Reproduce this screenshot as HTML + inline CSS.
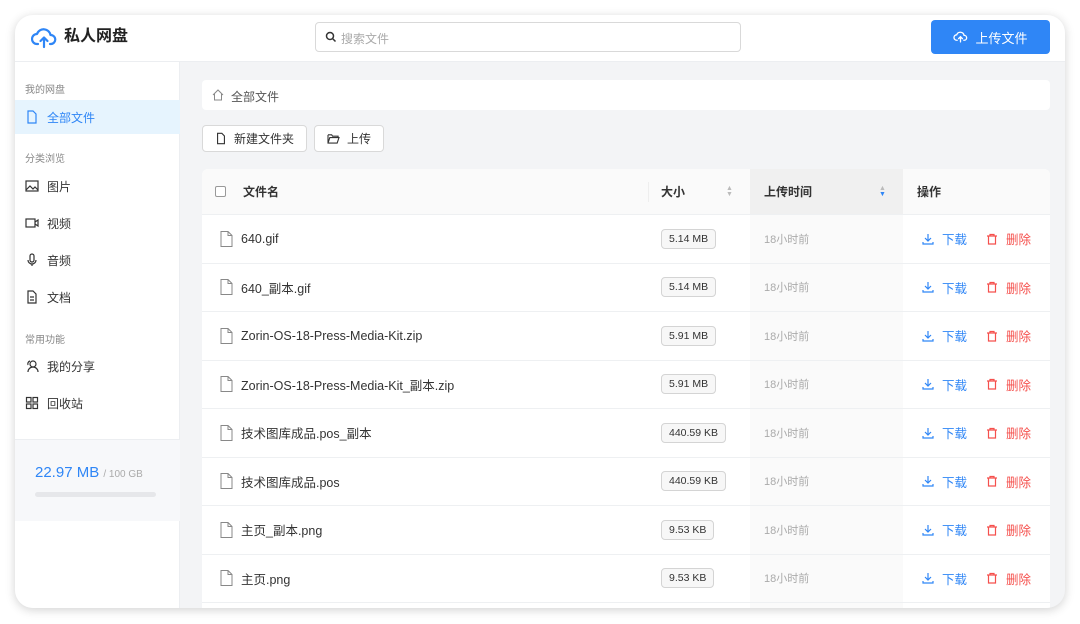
<!DOCTYPE html>
<html><head><meta charset="utf-8"><style>
*{box-sizing:border-box;margin:0;padding:0}
body{width:1080px;height:624px;background:#fff;font-family:"Liberation Sans","Noto Sans CJK SC",sans-serif;position:relative;overflow:hidden;color:#333}
.win{position:absolute;left:15px;top:15px;width:1050px;height:593px;border-radius:18px;background:#f3f4f6;overflow:hidden;box-shadow:0 2px 10px rgba(0,0,0,.18)}
.hdr{position:absolute;left:0;top:0;width:1050px;height:47px;background:#fff;border-bottom:1px solid #eceef1}
.side{position:absolute;left:0;top:47px;width:165px;height:546px;background:#fff;border-right:1px solid #eceef1}
.abs{position:absolute}
.sec{position:absolute;left:10px;font-size:10px;color:#888}
.it{position:absolute;left:0;width:165px;height:34px;font-size:12px;color:#333;display:flex;align-items:center;padding-left:10px}
.it svg{margin-right:8px}
.tbl{position:absolute;left:187px;top:154px;width:848px;height:450px;background:#fff;border-radius:6px;overflow:hidden}
.row{position:absolute;left:0;width:848px;height:48.5px;border-bottom:1px solid #eef0f2;font-size:12.5px}
.c{position:absolute;top:0;height:100%;display:flex;align-items:center}
.tag{border:1px solid #d4d4d4;background:#f7f7f7;border-radius:4px;font-size:10.5px;padding:3px 7px;color:#333}
</style></head><body>
<div class="win">
 <div class="hdr">
  <svg class="abs" style="left:16px;top:12px" width="26" height="22" viewBox="0 0 26 22" fill="none" stroke="#2f86f6" stroke-width="2.2" stroke-linecap="round" stroke-linejoin="round"><path d="M7 17H6a5 5 0 0 1 0-10 7 7 0 0 1 13.5 1 4.5 4.5 0 0 1 0.5 9h-1"/><path d="M13 20v-9M9.5 14l3.5-3.5 3.5 3.5"/></svg>
  <div class="abs" style="left:49px;top:11px;font-size:16px;font-weight:bold;color:#222;line-height:22px">私人网盘</div>
  <div class="abs" style="left:300px;top:7px;width:426px;height:30px;border:1px solid #d9d9d9;border-radius:4px;font-size:12px;color:#aaa;padding:7px 0 0 25px">搜索文件
   <svg class="abs" style="left:9px;top:8px" width="12" height="12" viewBox="0 0 12 12" fill="none" stroke="#333" stroke-width="1.5"><circle cx="5" cy="5" r="3.5"/><path d="M7.5 7.5l3 3"/></svg></div>
  <div class="abs" style="left:916px;top:5px;width:119px;height:34px;background:#2f86f6;border-radius:4px;color:#fff;font-size:13px;display:flex;align-items:center;justify-content:center">
   <svg width="15" height="12" viewBox="0 0 26 22" fill="none" stroke="#fff" stroke-width="2.4" stroke-linecap="round" style="margin-right:7px"><path d="M7 17H6a5 5 0 0 1 0-10 7 7 0 0 1 13.5 1 4.5 4.5 0 0 1 0.5 9h-1"/><path d="M13 20v-9M9.5 14l3.5-3.5 3.5 3.5"/></svg>上传文件</div>
 </div>
 <div class="side">
  <div class="sec" style="top:19px">我的网盘</div>
  <div class="it" style="top:38px;background:#e6f4fe;color:#2f86f6"><svg width="14" height="14" viewBox="0 0 14 14" fill="none" stroke="#2f86f6" stroke-width="1.2"><path d="M3 1h5l3 3v9H3z"/></svg>全部文件</div>
  <div class="sec" style="top:88px">分类浏览</div>
  <div class="it" style="top:107px"><svg width="14" height="14" viewBox="0 0 14 14" fill="none" stroke="#333" stroke-width="1.2"><rect x="1" y="2" width="12" height="10"/><path d="M1 11l4-4 3 3 2-2 3 3"/></svg>图片</div>
  <div class="it" style="top:144px"><svg width="14" height="14" viewBox="0 0 14 14" fill="none" stroke="#333" stroke-width="1.2"><rect x="1" y="3" width="9" height="8"/><path d="M10 6l3-2v6l-3-2"/></svg>视频</div>
  <div class="it" style="top:181px"><svg width="14" height="14" viewBox="0 0 14 14" fill="none" stroke="#333" stroke-width="1.2"><rect x="5" y="1" width="4" height="8" rx="2"/><path d="M3 7a4 4 0 0 0 8 0M7 11v2"/></svg>音频</div>
  <div class="it" style="top:218px"><svg width="14" height="14" viewBox="0 0 14 14" fill="none" stroke="#333" stroke-width="1.2"><path d="M3 1h5l3 3v9H3zM5 7h4M5 10h4"/></svg>文档</div>
  <div class="sec" style="top:269px">常用功能</div>
  <div class="it" style="top:287px"><svg width="14" height="14" viewBox="0 0 14 14" fill="none" stroke="#333" stroke-width="1.2"><circle cx="8" cy="5" r="3"/><path d="M3 13a5 5 0 0 1 10 0M5 2a3 3 0 0 0-2 4"/></svg>我的分享</div>
  <div class="it" style="top:324px"><svg width="14" height="14" viewBox="0 0 14 14" fill="none" stroke="#333" stroke-width="1.2"><rect x="1.5" y="1.5" width="4.5" height="4.5"/><rect x="8" y="1.5" width="4.5" height="4.5"/><rect x="1.5" y="8" width="4.5" height="4.5"/><rect x="8" y="8" width="4.5" height="4.5"/></svg>回收站</div>
  <div class="abs" style="left:0;top:377px;width:165px;height:82px;background:#f7f8fa;border-top:1px solid #eceef1">
   <div class="abs" style="left:20px;top:24px;font-size:15px;color:#2f86f6">22.97 MB <span style="font-size:10px;color:#aaa">/ 100 GB</span></div>
   <div class="abs" style="left:20px;top:52px;width:121px;height:5px;border-radius:3px;background:#e6e7ea"></div>
  </div>
 </div>
 <div class="abs" style="left:187px;top:65px;width:848px;height:30px;background:#fff;border-radius:4px;font-size:12px;color:#555;padding:8px 0 0 29px">全部文件
  <svg class="abs" style="left:10px;top:9px" width="12" height="12" viewBox="0 0 12 12" fill="none" stroke="#888" stroke-width="1"><path d="M1 6l5-5 5 5M2.5 5v6h7V5"/></svg></div>
 <div class="abs" style="left:187px;top:110px;width:105px;height:27px;background:#fff;border:1px solid #d9d9d9;border-radius:4px;font-size:12px;display:flex;align-items:center;padding-left:12px"><svg width="12" height="13" viewBox="0 0 14 14" fill="none" stroke="#333" stroke-width="1.3" style="margin-right:7px"><path d="M3 1h5l3 3v9H3z"/></svg>新建文件夹</div>
 <div class="abs" style="left:299px;top:110px;width:70px;height:27px;background:#fff;border:1px solid #d9d9d9;border-radius:4px;font-size:12px;display:flex;align-items:center;padding-left:12px"><svg width="13" height="11" viewBox="0 0 14 12" fill="none" stroke="#333" stroke-width="1.2" style="margin-right:7px"><path d="M1 2h4l1 1.5h6V5M1 2v9h10l2-6H3l-2 6"/></svg>上传</div>
 <div class="tbl">
  <div class="row" style="top:0;height:46px;background:#fafafa;font-weight:bold;font-size:12px">
   <div class="c" style="left:13px"><div style="width:11px;height:11px;border:1px solid #999;border-radius:2px;background:#fff"></div></div>
   <div class="c" style="left:41px">文件名</div>
   <div class="c" style="left:446px;border-left:1px solid #eee;height:20px;top:13px"></div>
   <div class="c" style="left:459px">大小</div>
   <div class="c" style="left:524px;font-size:7px;color:#bbb;line-height:6px;flex-direction:column;justify-content:center">▲<br>▼</div>
   <div class="c" style="left:548px;width:153px;background:#f0f0f0;padding-left:14px">上传时间</div>
   <div class="c" style="left:677px;font-size:7px;color:#bbb;line-height:6px;flex-direction:column;justify-content:center"><span>▲</span><span style="color:#2f86f6">▼</span></div>
   <div class="c" style="left:715px">操作</div>
  </div>
  <div id="rows"></div>
 </div>
</div>
<script>
var d=[["640.gif","5.14 MB"],["640_副本.gif","5.14 MB"],["Zorin-OS-18-Press-Media-Kit.zip","5.91 MB"],["Zorin-OS-18-Press-Media-Kit_副本.zip","5.91 MB"],["技术图库成品.pos_副本","440.59 KB"],["技术图库成品.pos","440.59 KB"],["主页_副本.png","9.53 KB"],["主页.png","9.53 KB"],["x","1 KB"]];
var h="";d.forEach(function(r,i){var t=46+i*48.5;h+='<div class="row" style="top:'+t+'px"><div class="c" style="left:18px"><svg width="13" height="16" viewBox="0 0 13 16" fill="none" stroke="#888" stroke-width="1"><path d="M1 .5h7l4 4v11H1z M8 .5v4h4"/></svg></div><div class="c" style="left:39px;color:#333">'+(i<8?r[0]:'')+'</div><div class="c" style="left:459px">'+(i<8?'<span class="tag">'+r[1]+'</span>':'')+'</div><div class="c" style="left:548px;width:153px;background:#fafafa;padding-left:14px;color:#aaa;font-size:11px">'+(i<8?'18小时前':'')+'</div>'+(i<8?'<div class="c" style="left:720px;color:#2f86f6"><svg width="12" height="12" viewBox="0 0 12 12" fill="none" stroke="#2f86f6" stroke-width="1.2" style="margin-right:8px"><path d="M6 1v7M3 5l3 3 3-3M1 9v2h10V9"/></svg>下载</div><div class="c" style="left:784px;color:#f5504d"><svg width="12" height="12" viewBox="0 0 12 12" fill="none" stroke="#f5504d" stroke-width="1.2" style="margin-right:8px"><path d="M1 3h10M4 3V1.5h4V3M2.5 3v8h7V3"/></svg>删除</div>':'')+'</div>'});
document.getElementById("rows").innerHTML=h;
</script>
</body></html>
